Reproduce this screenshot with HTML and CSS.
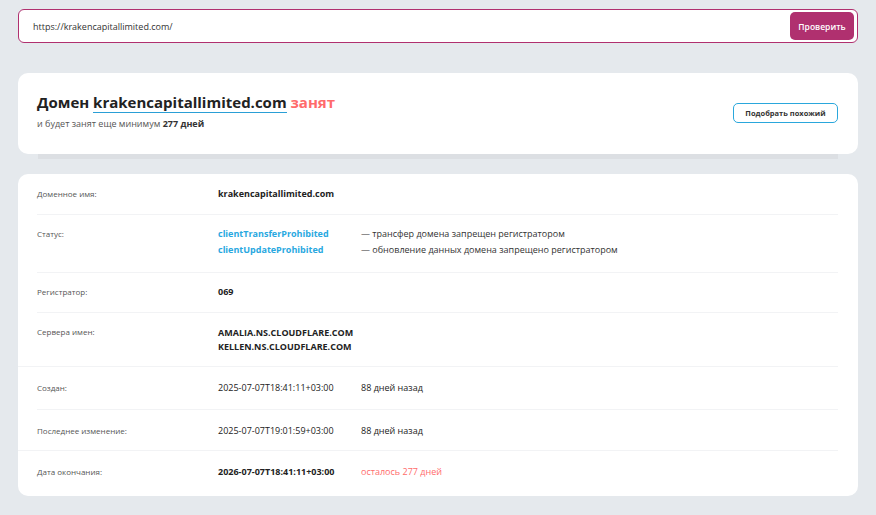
FILE: index.html
```html
<!DOCTYPE html>
<html lang="ru">
<head>
<meta charset="utf-8">
<title>Whois</title>
<link rel="stylesheet" href="styles.css">
</head>
<body>
<div class="page">
  <form class="search">
    <span class="search-input">https://krakencapitallimited.com/</span>
    <button type="button" class="search-btn">Проверить</button>
  </form>

  <div class="summary-wrap">
    <div class="summary">
      <div class="summary-text">
        <h1 class="title">Домен <span class="domain-link">krakencapitallimited.com</span> <span class="busy">занят</span></h1>
        <p class="subtitle">и будет занят еще минимум <b>277 дней</b></p>
      </div>
      <button type="button" class="similar-btn">Подобрать похожий</button>
    </div>
    <div class="summary-shadow"></div>
  </div>

  <div class="details">
    <div class="row">
      <div class="label">Доменное имя:</div>
      <div class="value bold">krakencapitallimited.com</div>
    </div>
    <div class="row row-status">
      <div class="label">Статус:</div>
      <div class="status-grid">
        <span class="status">clientTransferProhibited</span>
        <span class="desc">— трансфер домена запрещен регистратором</span>
        <span class="status">clientUpdateProhibited</span>
        <span class="desc">— обновление данных домена запрещено регистратором</span>
      </div>
    </div>
    <div class="row">
      <div class="label">Регистратор:</div>
      <div class="value bold">069</div>
    </div>
    <div class="row row-ns full">
      <div class="label">Сервера имен:</div>
      <div class="value bold ns">AMALIA.NS.CLOUDFLARE.COM<br>KELLEN.NS.CLOUDFLARE.COM</div>
    </div>
    <div class="row row-date">
      <div class="label">Создан:</div>
      <div class="value date">2025-07-07T18:41:11+03:00</div>
      <div class="value">88 дней назад</div>
    </div>
    <div class="row row-date2 full">
      <div class="label">Последнее изменение:</div>
      <div class="value date">2025-07-07T19:01:59+03:00</div>
      <div class="value">88 дней назад</div>
    </div>
    <div class="row row-date2 last">
      <div class="label">Дата окончания:</div>
      <div class="value date bold">2026-07-07T18:41:11+03:00</div>
      <div class="value red">осталось 277 дней</div>
    </div>
  </div>
</div>
</body>
</html>
```
FILE: styles.css
```css
* { box-sizing: border-box; }
html, body { margin: 0; padding: 0; }
body {
  background: #e5e9ed;
  font-family: "Open Sans", "Noto Sans", sans-serif;
  color: #222;
  width: 876px;
  height: 515px;
  overflow: hidden;
}
.page {
  padding: 9px 18px 0 18px;
}
.search {
  display: flex;
  align-items: center;
  justify-content: space-between;
  height: 34px;
  border: 1px solid #b0306f;
  border-radius: 6px;
  background: #fff;
  padding: 0 3px 0 14px;
  margin: 0;
}
.search-input {
  font-size: 9px;
  color: #333;
}
.search-btn {
  background: #b0306f;
  color: #fff;
  border: none;
  border-radius: 5px;
  width: 64px;
  height: 28px;
  font-family: inherit;
  font-size: 8.5px;
  font-weight: 600;
  padding: 0;
}
.summary-wrap {
  margin-top: 30px;
}
.summary {
  background: #fff;
  border-radius: 10px;
  height: 81px;
  display: flex;
  align-items: center;
  justify-content: space-between;
  padding: 0 20px 0 19px;
}
.summary-shadow {
  height: 5px;
  margin: 0 20px;
  background: #dcdfe3;
}
.title {
  margin: 0;
  font-size: 15px;
  font-weight: 700;
  color: #222;
  line-height: 20px;
  margin-top: -6px;
}
.domain-link {
  border-bottom: 1px solid #2a9fd6;
}
.busy { color: #ff6b6b; }
.subtitle {
  margin: 5px 0 0;
  font-size: 9px;
  color: #555;
}
.subtitle b { color: #333; font-weight: 700; }
.similar-btn {
  width: 105px;
  height: 20px;
  background: #fff;
  border: 1px solid #2aa7dc;
  border-radius: 5px;
  font-family: inherit;
  font-size: 7.5px;
  font-weight: 700;
  color: #333;
  padding: 0;
  margin-top: -1px;
}
.details {
  margin-top: 15px;
  background: #fff;
  border-radius: 10px;
  padding: 1px 0 5px;
}
.row {
  display: flex;
  align-items: flex-start;
  margin: 0 20px 0 19px;
  padding: 11px 0 12px;
  border-bottom: 1px solid #f2f3f5;
}
.row.full {
  margin-left: 0;
  padding-left: 19px;
}
.row.last { border-bottom: none; }
.label {
  width: 181px;
  flex: none;
  font-size: 8px;
  color: #555;
  line-height: 16px;
}
.value {
  font-size: 9px;
  line-height: 16px;
  color: #222;
}
.value.bold { font-weight: 700; }
.value.date { width: 143px; flex: none; }
.value.red { color: #ff6b6b; }
.row-status { padding: 11px 0 14px; }
.row.row-ns { padding-top: 11px; padding-bottom: 12px; }
.row.row-date { padding-top: 13px; padding-bottom: 13px; }
.row.row-date2 { padding-top: 13px; padding-bottom: 11px; }
.ns { line-height: 14px; padding-top: 2px; }
.status-grid {
  display: grid;
  grid-template-columns: 143px auto;
  line-height: 16px;
}
.status {
  font-size: 9px;
  font-weight: 700;
  color: #29a8df;
}
.desc {
  font-size: 9px;
  color: #333;
}
```
